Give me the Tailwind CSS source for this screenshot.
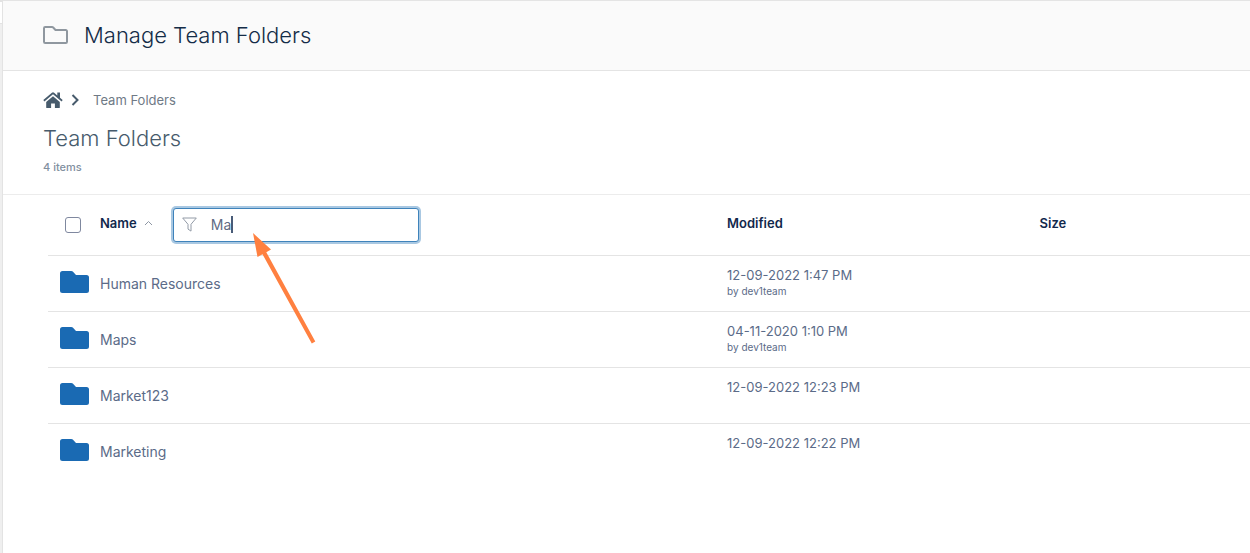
<!DOCTYPE html>
<html lang="en">
<head>
    <meta charset="UTF-8">
    <meta name="viewport" content="width=device-width, initial-scale=1.0">
    <title>Manage Team Folders</title>
    <script src="https://cdn.jsdelivr.net/npm/@tailwindcss/browser@4"></script>
</head>
<body class="flex min-h-screen bg-white font-['Inter',sans-serif] text-[#5b6b88]">
    <!-- edge of the collapsed sidebar -->
    <div class="flex w-[3px] shrink-0 flex-col border-r border-[#e3e3e3] bg-[#efefef]">
        <div class="h-6 border-t-2 border-b border-[#e3e3e3] bg-white"></div>
    </div>

    <div class="min-w-0 flex-1">
        <header class="flex h-[71px] items-center gap-4 border-y border-[#e4e4e4] bg-[#fafafa] pb-0.5 pl-10">
            <svg class="h-[18px] w-[25px]" viewBox="0 0 25 18" fill="none" stroke="#8f979f" stroke-width="2" stroke-linejoin="round">
                <path d="M2.200 1h6.800c.5 0 .9.200 1.200.5L12.500 4H22.800A1.200 1.200 0 0 1 24 5.200v10.600a1.200 1.200 0 0 1-1.200 1.200H2.200A1.200 1.200 0 0 1 1 15.800V2.200A1.200 1.200 0 0 1 2.200 1z"/>
            </svg>
            <h1 class="text-[22px] leading-7 font-[350] text-[#142c47]">Manage Team Folders</h1>
        </header>

        <main>
            <section class="border-b border-[#ececec] pt-[19px] pb-[19px] pl-10">
                <nav class="flex h-5 items-center" aria-label="Breadcrumb">
                    <a href="#" aria-label="Home">
                        <svg class="h-4 w-5" viewBox="0 0 20 16" fill="#475b6c">
                            <path d="M10 4.200 3.200 9.900v5.500c0 .3.3.6.6.6h4.300v-4.500h3.800V16h4.300c.3 0 .6-.3.6-.6V9.900z"/>
                            <path d="M19.700 8 17 5.700V.6h-2.700v2.800L11.100.8a1.700 1.700 0 0 0-2.200 0L.3 8l1.100 1.400L10 2.300l8.600 7.100z"/>
                        </svg>
                    </a>
                    <svg class="ml-2 h-3 w-2" viewBox="0 0 8 12" fill="none" stroke="#475b6c" stroke-width="2">
                        <path d="M1.500 1 6.500 6l-5 5"/>
                    </svg>
                    <a href="#" class="ml-3.5 text-[13px] leading-5 text-[#6f7a86]">Team Folders</a>
                </nav>
                <h2 class="mt-3 text-[22px] leading-8 font-[350] text-[#475b6c]">Team Folders</h2>
                <p class="mt-[5px] text-[11px] leading-4 font-medium text-[#8290a0]">4 items</p>
            </section>

            <div class="pl-[45px]">
                <table class="w-full table-fixed border-collapse text-left">
                    <thead>
                        <tr class="h-[60px] border-b border-[#e4e4e4] text-[13px] leading-5 text-[#12284c]">
                            <th class="w-13 pl-[17px]">
                                <input type="checkbox" aria-label="Select all" class="block size-4 appearance-none rounded-[3px] border border-[#7f889f] bg-white">
                            </th>
                            <th class="w-[52%] font-semibold">
                                <div class="flex items-center">
                                    <button type="button" class="flex items-center gap-[7px] pb-1">
                                        Name
                                        <svg class="h-2 w-[9px]" viewBox="0 0 9 8" fill="none" stroke="#8d96a3"><path d="M1 6l3.500-3.500L8 6"/></svg>
                                    </button>
                                    <label class="ml-5 flex h-[34px] w-[246px] items-center rounded-[3px] border border-[#3f83bb] bg-white pl-2 font-normal ring-2 ring-[#a9c8e2]">
                                        <svg class="mr-3.5 size-[15px]" viewBox="0 0 15 15" fill="none" stroke="#929aa6" stroke-linejoin="round">
                                            <path d="M.7 1h13.600L9 7.300v6.800l-3-2V7.300z"/>
                                        </svg>
                                        <input type="text" value="Ma" aria-label="Filter by name" class="field-sizing-content text-sm text-[#5f6c84] outline-none">
                                        <span class="h-[17px] w-0.5 bg-[#485b78]"></span>
                                    </label>
                                </div>
                            </th>
                            <th class="w-[26%] pb-1 pl-0.5 font-semibold">Modified</th>
                            <th class="pb-1 pl-0.5 font-semibold">Size</th>
                        </tr>
                    </thead>
                    <tbody id="folders" class="divide-y divide-[#e4e4e4]"></tbody>
                </table>
            </div>
        </main>
    </div>

    <!-- annotation arrow -->
    <svg class="pointer-events-none absolute top-[232px] left-[252px] h-28 w-16" viewBox="0 0 64 112" fill="#ff8040">
        <path d="M1 1 19 17.500 14.300 20.200 63.300 109.600 59.800 111.500 10.500 22.200 5.500 25z"/>
    </svg>

    <script>
        const folders = [
            { name: 'Human Resources', modified: '12-09-2022 1:47 PM', by: 'dev1team' },
            { name: 'Maps', modified: '04-11-2020 1:10 PM', by: 'dev1team' },
            { name: 'Market123', modified: '12-09-2022 12:23 PM' },
            { name: 'Marketing', modified: '12-09-2022 12:22 PM' },
        ];

        document.getElementById('folders').innerHTML = folders.map(f => `
            <tr class="h-14">
                <td class="pb-0.5 pl-3">
                    <svg class="h-[22px] w-[29px]" viewBox="0 0 29 22" fill="#1a6ab3">
                        <path d="M2.500 0h8.700c.7 0 1.200.2 1.600.6L16 4H26.500A2.500 2.500 0 0 1 29 6.500v13a2.500 2.500 0 0 1-2.500 2.500h-24A2.500 2.500 0 0 1 0 19.500v-17A2.500 2.500 0 0 1 2.500 0z"/>
                    </svg>
                </td>
                <td class="pt-0.5 text-sm leading-5"><a href="#">${f.name}</a></td>
                <td class="pt-[9px] pl-0.5 align-top text-[13px] leading-5">
                    ${f.modified}
                    ${f.by ? `<div class="text-[10px] leading-3">by ${f.by}</div>` : ''}
                </td>
                <td></td>
            </tr>`).join('');
    </script>
</body>
</html>
